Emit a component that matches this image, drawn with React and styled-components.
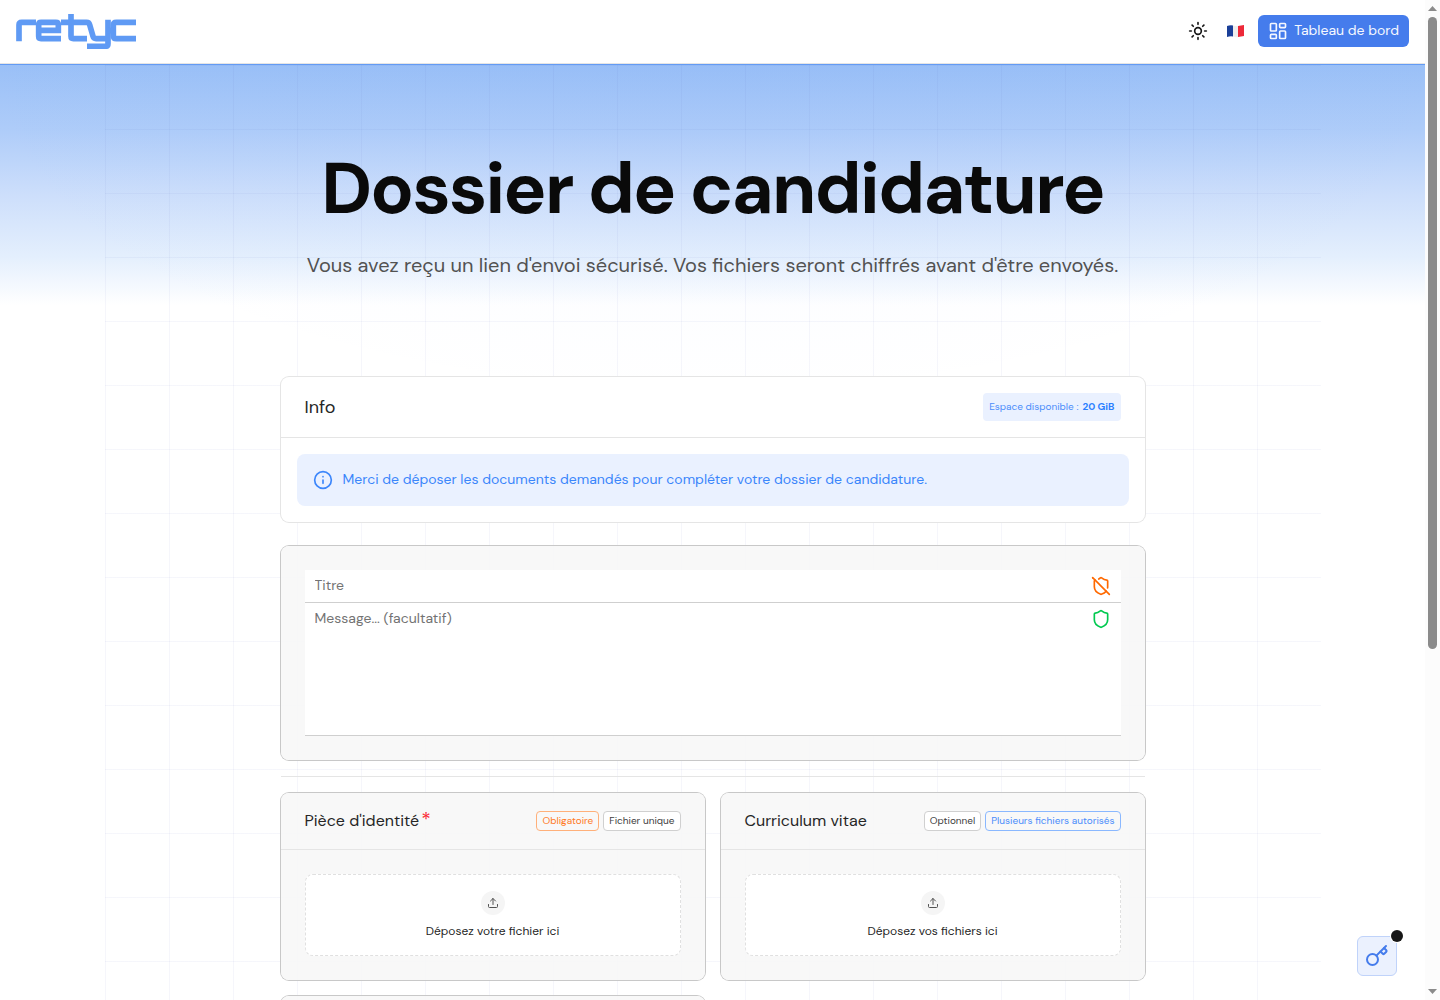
import React from "react";
import styled, { createGlobalStyle } from "styled-components";
import { Info, Key, LayoutDashboard, Shield, ShieldOff, Sun, Upload } from "lucide-react";

const GlobalStyle = createGlobalStyle`
  *, *::before, *::after { box-sizing: border-box; }
  body { margin: 0; }
  body, button, input, textarea {
    font-family: "DM Sans", "Open Sans", sans-serif;
  }
`;

const Shell = styled.div`
  display: flex;
  height: 100vh;
  overflow: hidden;
  background: #fff;
  color: #262626;
`;

const Page = styled.div`
  position: relative;
  flex: 1;
  min-width: 0;
  overflow: hidden;
`;

const Header = styled.header`
  display: flex;
  align-items: center;
  justify-content: space-between;
  height: 64px;
  padding: 0 16px 1px;
  border-bottom: 1px solid #e5e5e5;
`;

const Brand = styled.a`
  display: block;
  height: 34px;
`;

const Nav = styled.nav`
  display: flex;
  align-items: center;
  gap: 6px;
`;

const IconButton = styled.button`
  display: grid;
  place-items: center;
  width: 32px;
  height: 32px;
  padding: 0;
  border: 0;
  background: none;
  color: #171717;
`;

const DashboardButton = styled.button`
  display: flex;
  align-items: flex-start;
  gap: 6px;
  height: 32px;
  padding: 6px 10px;
  border: 0;
  border-radius: 6px;
  background: #457cec;
  color: #f5f8ff;
  font-size: 14px;
  line-height: 18px;
`;

const Backdrop = styled.div`
  border-top: 1px solid #639bf4;
  background:
    radial-gradient(ellipse 760px 340px at 50% 0, rgba(80, 130, 250, 0.04), transparent),
    linear-gradient(#9ac0f7 0, #aeccf9 64px, #ccdefb 128px, #e4effd 192px, #fff 240px);
`;

const Grid = styled.div`
  max-width: 1216px;
  margin: 0 auto;
  background-image:
    linear-gradient(rgba(70, 80, 180, 0.05) 1px, transparent 1px),
    linear-gradient(90deg, rgba(70, 80, 180, 0.05) 1px, transparent 1px);
  background-size: 64px 64px;
`;

const Hero = styled.section`
  padding: 80px 0 96px;
  text-align: center;
`;

const Title = styled.h1`
  margin: 0;
  color: #0a0a0a;
  font-size: 72px;
  font-weight: 700;
  letter-spacing: -0.025em;
  line-height: 88px;
`;

const Subtitle = styled.p`
  margin: 16px 0 0;
  color: #525252;
  font-size: 20px;
  line-height: 32px;
`;

const Content = styled.main`
  max-width: 864px;
  margin: 0 auto;
`;

const Card = styled.section`
  border-radius: 8px;
  background: ${(p) => (p.$muted ? "rgba(247, 247, 247, 0.9)" : "#fff")};
  box-shadow: 0 0 0 1px ${(p) => (p.$muted ? "#c8c8c8" : "#e5e5e5")};
`;

const CardHeader = styled.div`
  display: flex;
  align-items: center;
  justify-content: space-between;
  min-height: ${(p) => (p.$compact ? 57 : 61)}px;
  padding: 0 24px;
  border-bottom: 1px solid #e5e5e5;
`;

const CardTitle = styled.h2`
  margin: 0;
  font-size: ${(p) => (p.$compact ? 16 : 18)}px;
  font-weight: 400;
  line-height: 24px;
`;

const Required = styled.span`
  margin-left: 2px;
  color: #fb2c36;
  font-size: 20px;
  line-height: 1;
`;

const Quota = styled.div`
  display: flex;
  gap: 4px;
  padding: 6px;
  border-radius: 4px;
  background: #eaf1ff;
  color: #4a8dfb;
  font-size: 10px;
  line-height: 16px;

  strong { color: #2b7fff; }
`;

const CardBody = styled.div`
  padding: ${(p) => (p.$tight ? 16 : 24)}px;
`;

const Notice = styled.p`
  display: flex;
  align-items: flex-start;
  gap: 10px;
  margin: 0;
  padding: 16px;
  border-radius: 8px;
  background: #eaf1ff;
  color: #3b86fb;
  font-size: 14px;
  line-height: 18px;
`;

const MessageForm = styled.form`
  margin-top: 24px;
`;

const Field = styled.label`
  display: flex;
  align-items: flex-start;
  justify-content: space-between;
  padding: 6px 10px;
  border-bottom: 1px solid #cfcfcf;
  background: #fff;
`;

const fieldText = `
  flex: 1;
  min-width: 0;
  padding: 0;
  border: 0;
  outline: 0;
  background: none;
  color: #262626;
  font-size: 14px;
  line-height: 18px;
  &::placeholder { color: #737373; opacity: 1; }
`;

const TitleInput = styled.input`
  ${fieldText}
  height: 18px;
`;

const MessageInput = styled.textarea`
  ${fieldText}
  height: 120px;
  resize: none;
`;

const Divider = styled.hr`
  height: 1px;
  margin: 16px 0;
  border: 0;
  background: #e5e5e5;
`;

const Requests = styled.div`
  display: grid;
  grid-template-columns: 1fr 1fr;
  gap: 16px;
`;

const Tags = styled.div`
  display: flex;
  gap: 4px;
`;

const tones = {
  neutral: { line: "#d0d0d0", text: "#404040", fill: "#fff" },
  warning: { line: "#ffb07a", text: "#ff7a26", fill: "transparent" },
  info: { line: "#8ab8ff", text: "#4a8dfb", fill: "transparent" },
};

const Tag = styled.span`
  padding: 1px 5px;
  border: 1px solid ${(p) => tones[p.$tone].line};
  border-radius: 4px;
  background: ${(p) => tones[p.$tone].fill};
  color: ${(p) => tones[p.$tone].text};
  font-size: 10px;
  line-height: 16px;
`;

const DropZone = styled.button`
  display: flex;
  flex-direction: column;
  align-items: center;
  gap: 8px;
  width: 100%;
  padding: 16px;
  border: 1px dashed #e0e0e0;
  border-radius: 8px;
  background: #fff;
  color: #262626;
  font-size: 12px;
  line-height: 16px;
`;

const UploadMark = styled.span`
  display: grid;
  place-items: center;
  width: 24px;
  height: 24px;
  border-radius: 50%;
  background: #f5f5f5;
  color: #525252;
`;

const KeyButton = styled.button`
  position: absolute;
  right: 28px;
  bottom: 24px;
  display: grid;
  place-items: center;
  width: 40px;
  height: 40px;
  padding: 0;
  border: 1px solid #c0d3fa;
  border-radius: 6px;
  background: #ebf1fe;
  color: #457cec;

  &::after {
    content: "";
    position: absolute;
    top: -7px;
    right: -7px;
    width: 12px;
    height: 12px;
    border-radius: 50%;
    background: #171717;
    box-shadow: 0 0 0 1px #fff;
  }
`;

const ScrollTrack = styled.div`
  display: flex;
  flex-direction: column;
  align-items: center;
  justify-content: space-between;
  width: 15px;
  padding: 6px 0;
  background: #fcfcfc;
`;

const ScrollThumb = styled.div`
  flex: 0 0 64%;
  width: 9px;
  margin: 6px 0 auto;
  border-radius: 5px;
  background: #8b8b8b;
`;

const Logo = () => (
  <svg width="120" height="35" viewBox="0 0 360 105" fill="none" stroke="#5f9af4" strokeWidth="17" role="img" aria-label="retyc">
    <path d="M9 82V33q0-8 8-8H60" />
    <path d="M135 74H75q-7 0-7-7V32q0-7 7-7H120q7 0 7 7V49H68" />
    <path d="M165 0V67q0 7 7 7H213" />
    <path d="M135 25H212q7 0 9 7l10 35q2 7 9 7H278" />
    <path d="M276 17V89q0 8-8 8H213" />
    <path d="M360 25H301q-9 0-9 9V65q0 9 9 9H360" />
    <path d="M276 50H292" />
  </svg>
);

const FrenchFlag = () => (
  <svg width="18" height="14" viewBox="0 0 18 14" aria-hidden="true">
    <path d="M0 2Q3 1 6 1.500V12.500Q3 12 0 13Z" fill="#1a3f98" />
    <path d="M6 1.500Q9 2.500 12 2V13Q9 13.500 6 12.500Z" fill="#eee" />
    <path d="M11 2Q14 1.500 17 1V12Q14 12.500 11 13Z" fill="#ed2939" />
  </svg>
);

const Arrow = ({ down }) => (
  <svg width="9" height="5" viewBox="0 0 9 5" aria-hidden="true">
    <path d={down ? "M0 0H9L4.500 5Z" : "M0 5H9L4.500 0Z"} fill="#8b8b8b" />
  </svg>
);

const requests = [
  {
    title: "Pièce d'identité",
    required: true,
    tags: [["warning", "Obligatoire"], ["neutral", "Fichier unique"]],
    prompt: "Déposez votre fichier ici",
  },
  {
    title: "Curriculum vitae",
    tags: [["neutral", "Optionnel"], ["info", "Plusieurs fichiers autorisés"]],
    prompt: "Déposez vos fichiers ici",
  },
];

function FileRequest({ title, required, tags, prompt }) {
  return (
    <Card $muted>
      <CardHeader $compact>
        <CardTitle $compact>
          {title}
          {required && <Required>*</Required>}
        </CardTitle>
        <Tags>
          {tags.map(([tone, text]) => (
            <Tag key={text} $tone={tone}>{text}</Tag>
          ))}
        </Tags>
      </CardHeader>
      <CardBody>
        <DropZone type="button">
          <UploadMark><Upload size={12} strokeWidth={2} /></UploadMark>
          {prompt}
        </DropZone>
      </CardBody>
    </Card>
  );
}

export default function App() {
  return (
    <Shell>
      <GlobalStyle />
      <Page>
        <Header>
          <Brand href="#"><Logo /></Brand>
          <Nav>
            <IconButton type="button" aria-label="Thème"><Sun size={20} /></IconButton>
            <IconButton type="button" aria-label="Langue"><FrenchFlag /></IconButton>
            <DashboardButton type="button">
              <LayoutDashboard size={20} />
              Tableau de bord
            </DashboardButton>
          </Nav>
        </Header>
        <Backdrop>
          <Grid>
            <Hero>
              <Title>Dossier de candidature</Title>
              <Subtitle>
                Vous avez reçu un lien d'envoi sécurisé. Vos fichiers seront chiffrés avant d'être envoyés.
              </Subtitle>
            </Hero>
            <Content>
              <Card>
                <CardHeader>
                  <CardTitle>Info</CardTitle>
                  <Quota>Espace disponible : <strong>20 GiB</strong></Quota>
                </CardHeader>
                <CardBody $tight>
                  <Notice>
                    <Info size={20} />
                    Merci de déposer les documents demandés pour compléter votre dossier de candidature.
                  </Notice>
                </CardBody>
              </Card>
              <MessageForm>
                <Card $muted>
                  <CardBody>
                    <Field>
                      <TitleInput aria-label="Titre" placeholder="Titre" />
                      <ShieldOff size={20} color="#ff6900" />
                    </Field>
                    <Field>
                      <MessageInput aria-label="Message" placeholder="Message... (facultatif)" />
                      <Shield size={20} color="#00c950" />
                    </Field>
                  </CardBody>
                </Card>
              </MessageForm>
              <Divider />
              <Requests>
                {requests.map((r) => <FileRequest key={r.title} {...r} />)}
                <Card $muted><CardHeader $compact /></Card>
              </Requests>
            </Content>
          </Grid>
        </Backdrop>
        <KeyButton type="button" aria-label="Clé"><Key size={24} /></KeyButton>
      </Page>
      <ScrollTrack aria-hidden="true">
        <Arrow />
        <ScrollThumb />
        <Arrow down />
      </ScrollTrack>
    </Shell>
  );
}
